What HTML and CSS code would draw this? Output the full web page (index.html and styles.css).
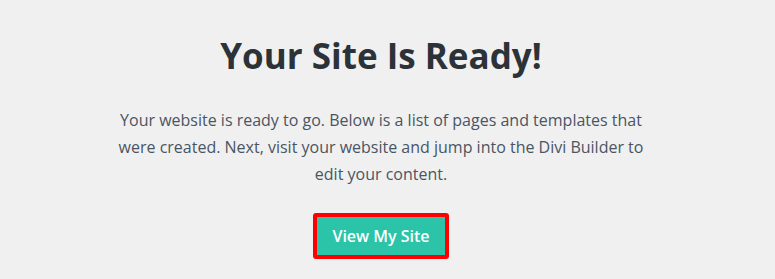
FILE: index.html
```html
<!DOCTYPE html>
<html lang="en">
<head>
<meta charset="utf-8">
<title>Your Site Is Ready!</title>
<link rel="stylesheet" href="styles.css">
</head>
<body>
<main class="page">
  <section class="ready">
    <h1 class="ready-title">Your Site Is Ready!</h1>
    <p class="ready-text">Your website is ready to go. Below is a list of pages and templates that were created. Next, visit your website and jump into the Divi Builder to edit your content.</p>
    <a class="ready-button" href="#">View My Site</a>
  </section>
</main>
</body>
</html>
```
FILE: styles.css
```css
html, body {
  margin: 0;
  padding: 0;
  background: #f0f0f1;
}
body {
  font-family: "Open Sans", "Liberation Sans", sans-serif;
  height: 279px;
  overflow: hidden;
}
.page {
  padding-right: 13px;
}
.ready {
  display: flex;
  flex-direction: column;
  align-items: center;
  padding-top: 34px;
}
.ready-title {
  margin: 0;
  font-size: 35px;
  line-height: 44px;
  font-weight: 700;
  color: #2c3338;
}
.ready-text {
  margin: 29px 0 0;
  width: 540px;
  font-size: 16px;
  line-height: 27px;
  color: #4a5562;
  text-align: center;
}
.ready-button {
  margin-top: 25px;
  display: flex;
  align-items: center;
  justify-content: center;
  width: 136px;
  height: 46px;
  box-sizing: border-box;
  border: 4px solid #ff0000;
  border-radius: 3px;
  background: #2bc4a8;
  color: #ffffff;
  font-size: 16px;
  font-weight: 600;
  text-decoration: none;
}
```
